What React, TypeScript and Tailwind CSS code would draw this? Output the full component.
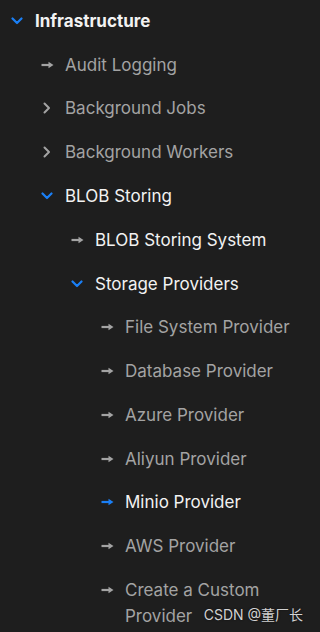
import React from "react";

type Node = {
  label: string;
  kind: "open" | "closed" | "leaf";
  active?: boolean;
  current?: boolean;
  bold?: boolean;
  children?: Node[];
};

const tree: Node[] = [
  {
    label: "Infrastructure",
    kind: "open",
    active: true,
    bold: true,
    children: [
      { label: "Audit Logging", kind: "leaf" },
      { label: "Background Jobs", kind: "closed" },
      { label: "Background Workers", kind: "closed" },
      {
        label: "BLOB Storing",
        kind: "open",
        active: true,
        children: [
          { label: "BLOB Storing System", kind: "leaf", active: true },
          {
            label: "Storage Providers",
            kind: "open",
            active: true,
            children: [
              { label: "File System Provider", kind: "leaf" },
              { label: "Database Provider", kind: "leaf" },
              { label: "Azure Provider", kind: "leaf" },
              { label: "Aliyun Provider", kind: "leaf" },
              { label: "Minio Provider", kind: "leaf", active: true, current: true },
              { label: "AWS Provider", kind: "leaf" },
              { label: "Create a Custom Provider", kind: "leaf" },
            ],
          },
        ],
      },
    ],
  },
];

const ChevronDown = () => (
  <svg width="12" height="8" viewBox="0 0 12 8" className="text-[#1a7ff5]">
    <path d="M1.5 1.5 L6 6 L10.5 1.5" fill="none" stroke="currentColor" strokeWidth="2.2" strokeLinecap="round" strokeLinejoin="round" />
  </svg>
);

const ChevronRight = () => (
  <svg width="8" height="12" viewBox="0 0 8 12" className="text-[#a3a3a3]">
    <path d="M1.5 1.5 L6 6 L1.5 10.5" fill="none" stroke="currentColor" strokeWidth="2" strokeLinecap="round" strokeLinejoin="round" />
  </svg>
);

const Arrow = ({ blue }: { blue?: boolean }) => (
  <svg width="13" height="8" viewBox="0 0 13 8" className={blue ? "text-[#1a7ff5]" : "text-[#a3a3a3]"}>
    <path d="M0.5 4 H8" stroke="currentColor" strokeWidth="2.2" />
    <path d="M7.5 0.8 L12.5 4 L7.5 7.2 Z" fill="currentColor" />
  </svg>
);

const TreeItem = ({ node }: { node: Node }) => {
  return (
    <li>
      <div className="flex items-start py-[8.9px] pl-[5px]">
        <span className="flex w-[24px] h-[26px] shrink-0 items-center justify-center">
          {node.kind === "open" && <ChevronDown />}
          {node.kind === "closed" && <ChevronRight />}
          {node.kind === "leaf" && <Arrow blue={node.current} />}
        </span>
        <span
          className={`ml-[6px] text-[17px] leading-[26px] pr-4 ${
            node.bold ? "font-bold" : "font-normal"
          } ${node.active ? "text-[#f2f2f2]" : "text-[#a3a3a3]"}`}
        >
          {node.label}
        </span>
      </div>
      {node.children && (
        <ul className="pl-[30px]">
          {node.children.map((c, idx) => (
            <TreeItem key={idx} node={c} />
          ))}
        </ul>
      )}
    </li>
  );
};

export default function App() {
  return (
    <div
      className="relative w-[320px] h-[632px] overflow-hidden bg-[#1e1e1e]"
      style={{ fontFamily: "Inter, 'Noto Sans CJK SC', sans-serif" }}
    >
      <ul className="-mt-[1px]">
        {tree.map((n, idx) => (
          <TreeItem key={idx} node={n} />
        ))}
      </ul>
      <div className="absolute right-[17px] bottom-[8px] text-[14px] leading-[18px] text-[#d2d2d2] [text-shadow:0_0_2px_rgba(0,0,0,0.6)]">
        CSDN @董厂长
      </div>
    </div>
  );
}
